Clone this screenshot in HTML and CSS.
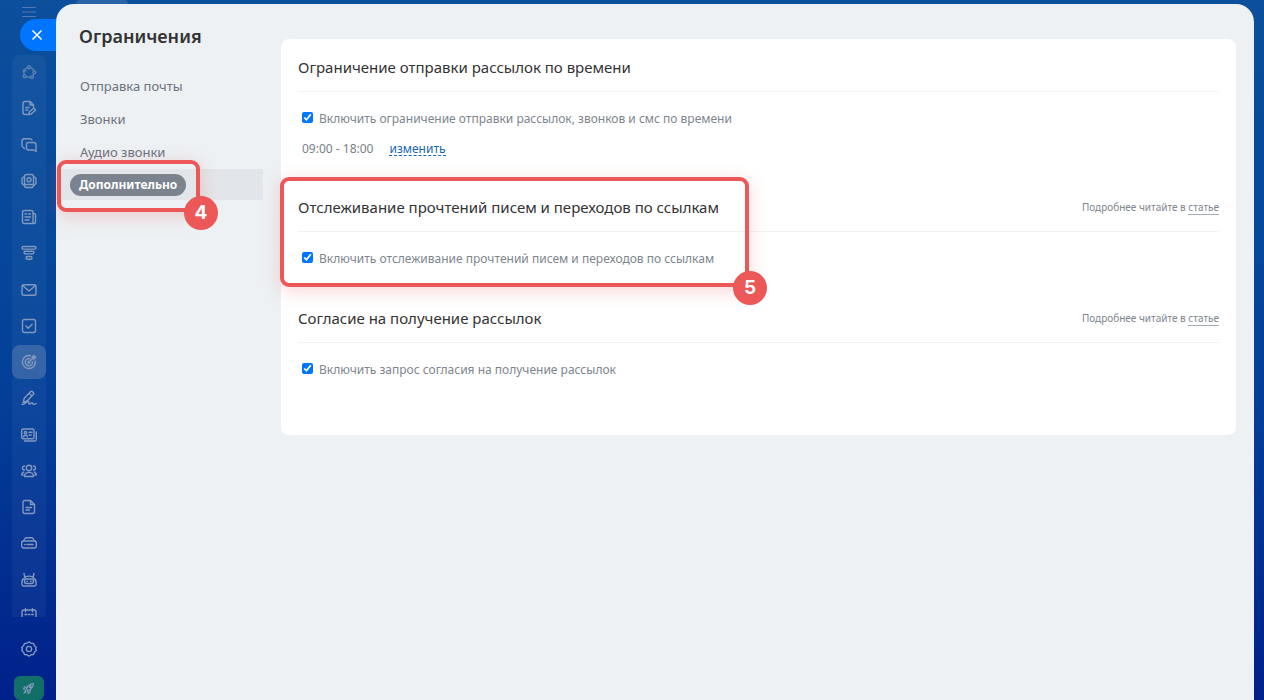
FILE: index.html
```html
<!DOCTYPE html>
<html lang="ru">
<head>
<meta charset="utf-8">
<title>Ограничения</title>
<link rel="stylesheet" href="styles.css">
</head>
<body>
<div class="app">
  <aside class="rail">
    <button class="rail-menu" type="button" aria-label="Меню"><svg class="icon" viewBox="0 0 16 16"><path d="M1.500 3.500h13M1.500 8h13M1.500 12.500h13"/></svg></button>
    <button class="close" type="button" aria-label="Закрыть"><svg viewBox="0 0 12 12"><path d="M1.500 1.500l9 9M10.500 1.500l-9 9"/></svg></button>
    <nav class="rail-nav" aria-label="Разделы">
      <ul class="rail-list">
        <li><a class="rail-link faint" href="#" aria-label="Процессы"><svg class="icon" viewBox="0 0 16 16"><circle cx="8" cy="3.200" r="1.500"/><circle cx="13.300" cy="8.300" r="1.400"/><circle cx="3.500" cy="12.300" r="1.400"/><circle cx="11" cy="13" r="1.400"/><path d="M6.300 3.700A5 5 0 0 0 3.300 10.500M9.600 3.700a5 5 0 0 1 3.300 3M12.800 9.700l-.9 2M9.500 13.500L5 12.700M2 7l1.300-1.500L5 7"/></svg></a></li>
        <li><a class="rail-link" href="#" aria-label="Заметки"><svg class="icon" viewBox="0 0 16 16"><path d="M6.500 14.500H4A2 2 0 0 1 2 12.500v-9a2 2 0 0 1 2-2h5.200L12.500 5v2M9 1.800V5h3.300M4.700 7.500H8M4.700 10h2"/><path d="M7.800 14.500l.5-2.400 4.500-4 1.900 1.900-4.500 4z"/></svg></a></li>
        <li><a class="rail-link" href="#" aria-label="Чаты"><svg class="icon" viewBox="0 0 16 16"><path d="M3.500 11.500L1.700 10A2 2 0 0 1 1 8.500V4a2.200 2.200 0 0 1 2.200-2.200H9A2.200 2.200 0 0 1 11 3"/><path d="M7.500 5.500h5.300A2.200 2.200 0 0 1 15 7.700v6.800L12.700 13H7.500a2 2 0 0 1-2-2V7.500a2 2 0 0 1 2-2z"/></svg></a></li>
        <li><a class="rail-link" href="#" aria-label="Лента"><svg class="icon" viewBox="0 0 16 16"><rect x="3.500" y="1.500" width="9" height="13" rx="2"/><circle cx="8" cy="6.700" r="2"/><path d="M2.500 4L1 5.500v5L2.500 12M13.500 4L15 5.500v5L13.500 12M4 11.500h8"/></svg></a></li>
        <li><a class="rail-link" href="#" aria-label="Новости"><svg class="icon" viewBox="0 0 16 16"><path d="M3 1.500h7.500A1.500 1.500 0 0 1 12 3v11.500H3A1.500 1.500 0 0 1 1.500 13V3A1.500 1.500 0 0 1 3 1.500zM12 4.500h1a1.500 1.500 0 0 1 1.500 1.500v7a1.500 1.500 0 0 1-1.500 1.500h-1M4 5h1.500M7.500 5H9.500M4 8h5.500M4 11h4"/></svg></a></li>
        <li><a class="rail-link" href="#" aria-label="Воронка"><svg class="icon" viewBox="0 0 16 16"><rect x="1" y="1.500" width="14" height="2.600" rx="1.300"/><rect x="3" y="6.300" width="10" height="2.600" rx="1.300"/><rect x="5" y="11.500" width="6" height="2.800" rx="1.400"/></svg></a></li>
        <li><a class="rail-link" href="#" aria-label="Почта"><svg class="icon" viewBox="0 0 16 16"><rect x="1" y="2.800" width="14" height="10.500" rx="1.800"/><path d="M1.500 3.500L8 9l6.500-5.500"/></svg></a></li>
        <li><a class="rail-link" href="#" aria-label="Задачи"><svg class="icon" viewBox="0 0 16 16"><rect x="1.500" y="1.500" width="13" height="13" rx="2"/><path d="M5 8l2.200 2.200 4-4"/></svg></a></li>
        <li><a class="rail-link current" href="#" aria-label="Маркетинг"><svg class="icon" viewBox="0 0 16 16"><path d="M9.500 1.700A6.500 6.500 0 1 0 14.300 7M8.800 4.700A3.600 3.600 0 1 0 11.500 8M7.800 8.200L12 4M11.300 4.600V2.700L13 1.200v1.800h1.800l-1.500 1.700z"/><circle cx="7.800" cy="8.200" r=".8"/></svg></a></li>
        <li><a class="rail-link" href="#" aria-label="Подпись"><svg class="icon" viewBox="0 0 16 16"><path d="M2.200 12.500l1-4.200L9.500 1.800a1.500 1.500 0 0 1 2.100 0l.6.600a1.500 1.500 0 0 1 0 2.100L6 11zM8.200 3.200l2.700 2.700M1 14.500c3 0 5-3.300 6.300-3.200 1.200.1-.3 2.400 1 2.700 1.200.2 1.700-1.300 2.700-1.200.9.100.5 1.500 1.700 1.600l2.300-.6"/></svg></a></li>
        <li><a class="rail-link" href="#" aria-label="Контакты"><svg class="icon" viewBox="0 0 16 16"><rect x="0.700" y="2" width="12.300" height="9.800" rx="1.500"/><path d="M3.500 14h10a1.800 1.800 0 0 0 1.800-1.800V5M8 5.300h3M8 8h2.300M2.500 9.800c.4-2 3.600-2 4 0"/><circle cx="4.500" cy="5.700" r="1.200"/></svg></a></li>
        <li><a class="rail-link" href="#" aria-label="Сотрудники"><svg class="icon" viewBox="0 0 16 16"><circle cx="8" cy="5" r="2.700"/><path d="M3.500 13.500c0-5.500 9-5.500 9 0zM3.500 3a2 2 0 0 0 0 4M12.500 3a2 2 0 0 1 0 4M2.700 9C1.300 9.600.7 10.500.7 12h1.500M13.300 9c1.400.6 2 1.500 2 3h-1.500"/></svg></a></li>
        <li><a class="rail-link" href="#" aria-label="Документы"><svg class="icon" viewBox="0 0 16 16"><path d="M4 1.500h5.500l4 4v7a2 2 0 0 1-2 2H4a2 2 0 0 1-2-2v-9a2 2 0 0 1 2-2zM9.500 1.500v4h4M5 8.500h5.500M5 11h3.500"/></svg></a></li>
        <li><a class="rail-link" href="#" aria-label="Диск"><svg class="icon" viewBox="0 0 16 16"><path d="M2.500 6L4 3.500a1.500 1.500 0 0 1 1.200-.7h5.600a1.500 1.500 0 0 1 1.200.7L13.500 6"/><rect x="0.700" y="6" width="14.600" height="7" rx="2"/><path d="M3.700 9.500h.6M6 9.500h6"/></svg></a></li>
        <li><a class="rail-link" href="#" aria-label="Роботы"><svg class="icon" viewBox="0 0 16 16"><path d="M3 1.500l1 4M13 1.500l-1 4M3 6.500C5 3.300 11 3.300 13 6.500c2.400 1 2.200 4.500 2 6a1.500 1.500 0 0 1-1.500 1.500h-11A1.500 1.500 0 0 1 1 12.500c-.2-1.500-.4-5 2-6z"/><rect x="3.500" y="7" width="9" height="4.500" rx="2"/><path d="M6 9.200h.4M9.600 9.200h.4"/></svg></a></li>
        <li><a class="rail-link" href="#" aria-label="Календарь"><svg class="icon" viewBox="0 0 16 16"><rect x="1" y="2" width="14" height="13" rx="2"/><path d="M4.500 0.700v3M11.500 0.700v3M4 6.500h1.500M7.300 6.500h1.500M10.700 6.500h1.500"/></svg></a></li>
      </ul>
    </nav>
    <a class="rail-link settings" href="#" aria-label="Настройки"><svg class="icon" viewBox="0 0 16 16"><path d="M8 .8l2 1.500 2.500.1.900 2.400 1.900 1.700-.8 1.500.8 1.500-1.900 1.700-.9 2.400-2.500.1-2 1.500-2-1.500-2.500-.1-.9-2.400L.7 9.500 1.500 8 .7 6.500l1.900-1.700.9-2.400L6 2.300z"/><circle cx="8" cy="8" r="2.600"/></svg></a>
    <a class="launch" href="#" aria-label="Запуск"><svg class="icon" viewBox="0 0 16 16"><path d="M5.500 8.500C7 4 10 2.300 14 2c-.3 4-2 7-6.500 8.500zM6.300 6L3 6.300 1.800 8.500l3.200.4M10 9.700L9.700 13l-2.200 1.200-.4-3.200M4.500 10.500l-2.300 3.300 3.300-2.300"/><circle cx="10.300" cy="5.700" r="1.200"/></svg></a>
  </aside>

  <div class="panel">
    <aside class="side">
      <h1 class="title">Ограничения</h1>
      <nav class="tabs">
        <a class="tab" href="#">Отправка почты</a>
        <a class="tab" href="#">Звонки</a>
        <a class="tab" href="#">Аудио звонки</a>
        <a class="tab selected" href="#" aria-current="page"><span class="pill">Дополнительно</span></a>
        <div class="mark mark-tab"><span class="mark-number">4</span></div>
      </nav>
    </aside>
    <main class="card">
      <section class="group">
        <header class="group-head"><h2>Ограничение отправки рассылок по времени</h2></header>
        <label class="check"><input type="checkbox" checked><span>Включить ограничение отправки рассылок, звонков и смс по времени</span></label>
        <p class="hours"><span>09:00 - 18:00</span><a href="#">изменить</a></p>
      </section>
      <section class="group">
        <header class="group-head"><h2>Отслеживание прочтений писем и переходов по ссылкам</h2><p class="more">Подробнее читайте в <a href="#">статье</a></p></header>
        <label class="check"><input type="checkbox" checked><span>Включить отслеживание прочтений писем и переходов по ссылкам</span></label>
        <div class="mark mark-group"><span class="mark-number">5</span></div>
      </section>
      <section class="group">
        <header class="group-head"><h2>Согласие на получение рассылок</h2><p class="more">Подробнее читайте в <a href="#">статье</a></p></header>
        <label class="check"><input type="checkbox" checked><span>Включить запрос согласия на получение рассылок</span></label>
      </section>
    </main>
  </div>
</div>
</body>
</html>
```
FILE: styles.css
```css
* { box-sizing: border-box; }
body {
  margin: 0;
  font-family: "Noto Sans", "Open Sans", sans-serif;
  color: #333;
  background: #001d87;
}
h1, h2, p, ul { margin: 0; padding: 0; }
ul { list-style: none; }
button { border: 0; padding: 0; background: none; cursor: pointer; }

.app {
  display: flex;
  height: 100vh;
  overflow: hidden;
  padding: 4px 10px 0 0;
  background: linear-gradient(#0c4f9c 0%, #05479a 35%, #033d98 60%, #00208a 100%);
}

/* Icon rail */
.rail {
  flex: none;
  width: 56px;
  padding-left: 1px;
  display: flex;
  flex-direction: column;
  align-items: center;
}
.icon {
  width: 16px;
  height: 16px;
  fill: none;
  stroke: #8299bd;
  stroke-width: 1.4;
  stroke-linecap: round;
  stroke-linejoin: round;
}
.rail-menu { height: 15px; line-height: 0; }
.rail-menu .icon { stroke: #5079b3; stroke-width: 1; }
.close {
  align-self: flex-end;
  flex: none;
  width: 36px;
  height: 32px;
  border-radius: 16px 0 0 16px;
  background: #0075ff;
}
.close svg {
  display: block;
  width: 12px;
  height: 12px;
  margin-left: 11px;
  fill: none;
  stroke: #fff;
  stroke-width: 1.5;
}
.rail-nav {
  flex: 1;
  min-height: 0;
  width: 34px;
  margin-top: 4px;
  overflow: hidden;
  border-radius: 8px 8px 0 0;
  background: rgba(255, 255, 255, .045);
}
.rail-list {
  height: 578px;
  display: flex;
  flex-direction: column;
  justify-content: space-between;
}
.rail-link {
  display: flex;
  align-items: center;
  justify-content: center;
  width: 34px;
  height: 34px;
  border-radius: 8px;
}
.rail-link.current { background: rgba(215, 215, 215, .2); }
.faint .icon { opacity: .65; }
.settings { flex: none; margin: 15px 0 10px; }
.launch {
  flex: none;
  display: flex;
  align-items: center;
  justify-content: center;
  width: 30px;
  height: 24px;
  border-radius: 6px;
  background: #126f68;
}
.launch .icon { width: 13px; height: 13px; }

/* Slider panel */
.panel {
  position: relative;
  flex: 1;
  min-width: 0;
  display: flex;
  align-items: flex-start;
  padding: 0 18px 0 0;
  border-radius: 18px 18px 0 0;
  background: #edf1f4;
}
.panel::before {
  content: "";
  position: absolute;
  left: 20px;
  top: -4px;
  width: 52px;
  height: 4px;
  border-radius: 4px 4px 0 0;
  background: rgba(255, 255, 255, .12);
}
.side { flex: none; width: 225px; padding: 20px 18px 0 0; }
.title {
  padding-left: 23px;
  font-size: 18px;
  line-height: 24px;
  font-weight: 600;
}
.tabs {
  position: relative;
  display: grid;
  gap: 2px;
  margin-top: 22px;
}
.tab {
  display: flex;
  align-items: center;
  height: 31px;
  padding-left: 24px;
  font-size: 13px;
  color: #6b7280;
  text-decoration: none;
}
.tab.selected {
  padding-left: 14px;
  font-size: 12px;
  background: #e2e6ea;
}
.pill {
  padding: 0 9px;
  border-radius: 11px;
  background: #7b838f;
  color: #fff;
  font-weight: 700;
  line-height: 22px;
}

.card {
  flex: 1;
  min-width: 0;
  margin-top: 35px;
  padding: 4px 17px 54px;
  border-radius: 8px;
  background: #fff;
}
.group { position: relative; padding-bottom: 24px; }
.group:last-child { padding-bottom: 0; }
.group-head {
  display: flex;
  align-items: center;
  justify-content: space-between;
  height: 49px;
  border-bottom: 1px solid #f0f2f3;
}
.group-head h2 { font-size: 15px; font-weight: 400; }
.more { font-size: 10px; color: #80868e; }
.more a {
  color: inherit;
  text-decoration: none;
  border-bottom: 1px solid #a5abb3;
}
.check {
  display: flex;
  align-items: center;
  gap: 6px;
  width: max-content;
  margin-top: 16px;
  padding-left: 4px;
  font-size: 12px;
  line-height: 22px;
  color: #7d858d;
}
.check input {
  width: 11px;
  height: 11px;
  margin: 0 0 3px;
  accent-color: #0075ff;
}
.hours {
  display: flex;
  gap: 16px;
  margin-top: 8px;
  padding-left: 4px;
  font-size: 12px;
  line-height: 21px;
  color: #777f87;
}
.hours a {
  height: 18px;
  color: #2067b0;
  text-decoration: none;
  border-bottom: 1px dashed #2067b0;
}

/* Numbered callouts */
.mark {
  position: absolute;
  z-index: 1;
  border: 4px solid #ec5757;
  border-radius: 9px;
  box-shadow: 0 4px 18px rgba(236, 87, 87, .25);
  pointer-events: none;
}
.mark-number {
  position: absolute;
  right: -22px;
  bottom: -22px;
  width: 34px;
  height: 34px;
  border-radius: 50%;
  background: #ec5757;
  color: #fff;
  font: 700 19px/34px Inter, sans-serif;
  text-align: center;
}
.mark-tab { left: 1px; bottom: -12px; width: 143px; height: 52px; }
.mark-group { left: -18px; top: -6px; width: 469px; height: 110px; }
```
